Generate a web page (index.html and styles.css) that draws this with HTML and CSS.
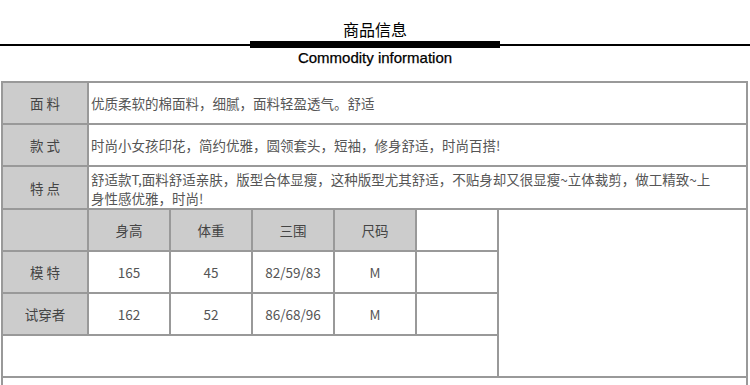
FILE: index.html
```html
<!DOCTYPE html>
<html lang="zh-CN">
<head>
<meta charset="utf-8">
<title>商品信息</title>
<link rel="stylesheet" href="styles.css">
</head>
<body>
<header class="head">
  <h1 class="title">商品信息</h1>
  <div class="rule"><span class="line"></span><span class="bar"></span><span class="line"></span></div>
  <p class="subtitle">Commodity information</p>
</header>
<div class="spec">
  <div class="c lab">面 料</div>
  <div class="c txt wide">优质柔软的棉面料，细腻，面料轻盈透气。舒适</div>
  <div class="c lab">款 式</div>
  <div class="c txt wide">时尚小女孩印花，简约优雅，圆领套头，短袖，修身舒适，时尚百搭!</div>
  <div class="c lab">特 点</div>
  <div class="c txt wide two">舒适款T,面料舒适亲肤，版型合体显瘦，这种版型尤其舒适，不贴身却又很显瘦~立体裁剪，做工精致~上<br>身性感优雅，时尚!</div>

  <div class="c lab"></div>
  <div class="c lab">身高</div>
  <div class="c lab">体重</div>
  <div class="c lab">三围</div>
  <div class="c lab">尺码</div>
  <div class="c"></div>
  <div class="c side"></div>

  <div class="c lab">模 特</div>
  <div class="c">165</div>
  <div class="c">45</div>
  <div class="c">82/59/83</div>
  <div class="c">M</div>
  <div class="c"></div>

  <div class="c lab">试穿者</div>
  <div class="c">162</div>
  <div class="c">52</div>
  <div class="c">86/68/96</div>
  <div class="c">M</div>
  <div class="c"></div>

  <div class="c span6"></div>
  <div class="c full"></div>
</div>
</body>
</html>
```
FILE: styles.css
```css
html, body {
  margin: 0;
  padding: 0;
  background: #fff;
}
body {
  font-family: "Noto Sans CJK SC", "Liberation Sans", sans-serif;
  color: #555;
}
.head {
  height: 81px;
  display: flex;
  flex-direction: column;
  align-items: center;
}
.title {
  margin: 19px 0 0;
  font-size: 16px;
  line-height: 20px;
  font-weight: normal;
  color: #000;
}
.rule {
  align-self: stretch;
  margin-top: 2px;
  height: 7px;
  display: flex;
  align-items: center;
}
.line {
  flex: 1;
  height: 2px;
  background: #000;
}
.bar {
  width: 250px;
  height: 7px;
  background: #000;
}
.subtitle {
  margin: 1px 0 0;
  font-family: "Liberation Sans", Arial, sans-serif;
  font-size: 15px;
  line-height: 18px;
  color: #000;
  -webkit-text-stroke: 0.25px #000;
}
.spec {
  margin-left: 1px;
  width: max-content;
  display: grid;
  grid-template-columns: 86px repeat(5, 82px) 249px;
  grid-template-rows: 42px 42px 43px 42px 42px 42px 42px 42px;
  border-top: 2px solid #999;
  border-left: 2px solid #999;
  font-size: 13.5px;
}
.c {
  box-sizing: border-box;
  border-right: 2px solid #999;
  border-bottom: 2px solid #999;
  display: flex;
  align-items: center;
  justify-content: center;
  background: #fff;
  color: #555;
}
.lab {
  background: #ccc;
  color: #444;
}
.txt {
  justify-content: flex-start;
  padding-left: 2px;
  white-space: nowrap;
}
.two {
  display: block;
  padding-top: 3px;
  line-height: 19px;
}
.wide {
  grid-column: 2 / 8;
}
.side {
  grid-column: 7;
  grid-row: 4 / 8;
}
.span6 {
  grid-column: 1 / 7;
}
.full {
  grid-column: 1 / 8;
}
```
